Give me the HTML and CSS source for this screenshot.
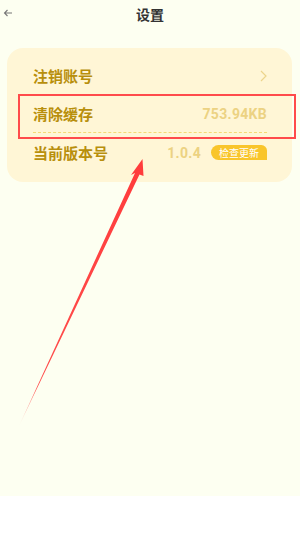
FILE: index.html
```html
<!DOCTYPE html>
<html lang="zh-CN">
<head>
    <meta charset="UTF-8">
    <title>设置</title>
    <link rel="stylesheet" href="styles.css">
</head>
<body>
<div class="page">
    <div class="header">
        <span class="back">
            <svg width="10" height="10" viewBox="0 0 10 10"><path d="M9 5H1.5M4.5 2 1.5 5l3 3" fill="none" stroke="#777" stroke-width="1.1"/></svg>
        </span>
        <span class="title">设置</span>
    </div>
    <div class="card">
        <div class="row">
            <span class="label">注销账号</span>
            <svg class="more" width="7" height="12" viewBox="0 0 7 12"><path d="M1 1l5 5-5 5" fill="none" stroke="#ecd58c" stroke-width="1.2"/></svg>
        </div>
        <div class="row">
            <span class="label">清除缓存</span>
            <span class="value">753.94KB</span>
        </div>
        <div class="row last">
            <span class="label">当前版本号</span>
            <span class="value">1.0.4</span>
            <span class="check">检查更新</span>
        </div>
    </div>

    <!-- 标注 -->
    <div class="mark"></div>
    <svg class="arrow" width="300" height="539" viewBox="0 0 300 539">
        <defs>
            <linearGradient id="fade" x1="19" y1="426" x2="142" y2="160" gradientUnits="userSpaceOnUse">
                <stop offset="0" stop-color="#ff3b3b" stop-opacity="0.1"/>
                <stop offset="0.15" stop-color="#ff3b3b" stop-opacity="0.9"/>
                <stop offset="1" stop-color="#ff3b3b"/>
            </linearGradient>
        </defs>
        <polygon points="142.5,159 143.5,176 139.5,174.5 19,426 135,173 131,175" fill="url(#fade)"/>
    </svg>
</div>
</body>
</html>
```

FILE: styles.css
```css
*{
    margin:0;
    padding:0;
    box-sizing:border-box;
}
body{
    width:300px;
    height:539px;
    background:#fff;
    font-family:"Noto Sans CJK SC", Roboto, sans-serif;
}
.page{
    position:relative;
    height:496px;
    background:#fdfff1;
}
.header{
    position:relative;
    height:28px;
    display:flex;
    align-items:center;
    justify-content:center;
}
.back{
    position:absolute;
    left:3px;
    top:8px;
    line-height:0;
}
.title{
    font-size:14px;
    font-weight:bold;
    color:#333;
    line-height:28px;
}
.card{
    margin:20px 8px 0 7px;
    padding:9px 0 10px;
    background:#fff6d6;
    border-radius:16px;
}
.row{
    display:flex;
    align-items:center;
    height:38px;
    margin:0 25px 0 26px;
    border-bottom:1px dashed #f6da72;
}
.row.last{
    border-bottom:none;
    height:39px;
}
.label{
    flex:1;
    font-size:15px;
    font-weight:bold;
    color:#b88f0c;
}
.value{
    font-family:Roboto, "Noto Sans CJK SC", sans-serif;
    font-size:14px;
    font-weight:bold;
    color:#ecd282;
    letter-spacing:0.3px;
}
.check{
    margin-left:10px;
    padding:0 8px;
    height:15px;
    line-height:15px;
    font-size:10px;
    color:#fff;
    background:#f9c52b;
    border-radius:8px 6px 0 8px;
}
.mark{
    position:absolute;
    left:18px;
    top:94px;
    width:278px;
    height:45px;
    border:2px solid #ff4b4b;
}
.arrow{
    position:absolute;
    left:0;
    top:0;
    pointer-events:none;
}
```
